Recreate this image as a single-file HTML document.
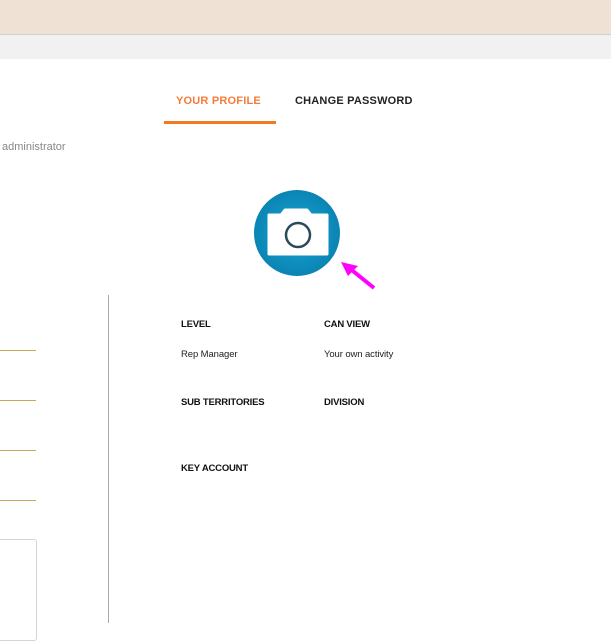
<!DOCTYPE html>
<html><head><style>
body{margin:0;width:611px;height:623px;position:relative;overflow:hidden;background:#fff;font-family:"Liberation Sans",sans-serif}
.a{position:absolute}
.lbl{font-size:9.5px;font-weight:bold;color:#111;letter-spacing:-.2px}
.val{font-size:9.5px;color:#222;letter-spacing:-.1px}
.ul{position:absolute;left:0;width:36px;height:1px;background:#c9a75a}
</style></head><body>
<div class="a" style="left:0;top:0;width:611px;height:34px;background:#efe1d4"></div>
<div class="a" style="left:0;top:34px;width:611px;height:1px;background:#d0d0d0"></div>
<div class="a" style="left:0;top:35px;width:611px;height:24px;background:#f1f1f1"></div>
<div class="a" style="left:176px;top:95px;font-size:11px;font-weight:bold;color:#f47b3a;letter-spacing:.2px">YOUR PROFILE</div>
<div class="a" style="left:295px;top:95px;font-size:11px;font-weight:bold;color:#222;letter-spacing:.2px">CHANGE PASSWORD</div>
<div class="a" style="left:164px;top:121px;width:112px;height:3px;background:#f47a1f"></div>
<div class="a" style="left:2px;top:141px;font-size:11px;color:#888">administrator</div>
<svg class="a" style="left:250px;top:186px" width="140" height="110">
<defs><radialGradient id="g" cx="50%" cy="50%" r="50%"><stop offset="0" stop-color="#1aa6d4"/><stop offset="1" stop-color="#0a84b3"/></radialGradient></defs>
<circle cx="47" cy="47" r="43" fill="url(#g)"/>
<path d="M19 29h12l4-5h22l4 5h16v39H19z" fill="#fff" stroke="#fff" stroke-width="3" stroke-linejoin="round"/>
<circle cx="48" cy="49" r="12" fill="none" stroke="#2b4a5a" stroke-width="2.5"/>
<line x1="124" y1="102" x2="98" y2="81" stroke="#f0f" stroke-width="4"/>
<polygon points="91,76 108,80 98,90" fill="#f0f"/>
</svg>
<div class="a" style="left:108px;top:295px;width:1px;height:328px;background:#aaa"></div>
<div class="ul" style="top:350px"></div><div class="ul" style="top:400px"></div>
<div class="ul" style="top:450px"></div><div class="ul" style="top:500px"></div>
<div class="a" style="left:-5px;top:539px;width:40px;height:100px;border:1px solid #d4d4d4;border-radius:3px"></div>
<div class="a lbl" style="left:181px;top:319px">LEVEL</div>
<div class="a lbl" style="left:324px;top:319px">CAN VIEW</div>
<div class="a val" style="left:181px;top:349px">Rep Manager</div>
<div class="a val" style="left:324px;top:349px">Your own activity</div>
<div class="a lbl" style="left:181px;top:397px">SUB TERRITORIES</div>
<div class="a lbl" style="left:324px;top:397px">DIVISION</div>
<div class="a lbl" style="left:181px;top:463px">KEY ACCOUNT</div>
</body></html>
